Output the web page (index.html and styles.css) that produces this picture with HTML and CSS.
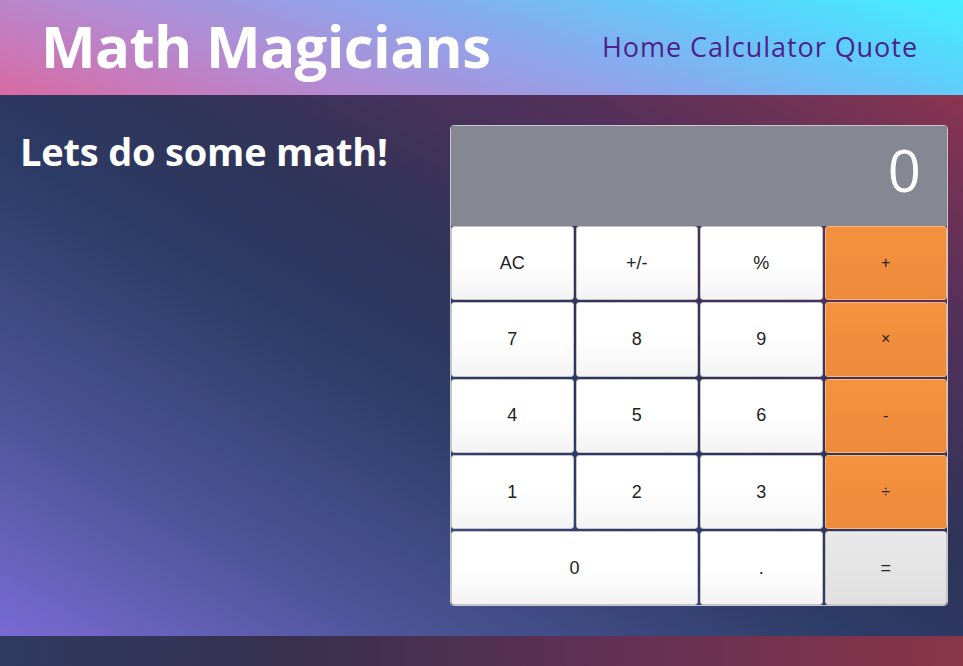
FILE: index.html
```html
<!DOCTYPE html>
<html lang="en">
<head>
<meta charset="utf-8">
<title>Math Magicians</title>
<link rel="stylesheet" href="styles.css">
</head>
<body>
<header class="header">
  <h1 class="brand">Math Magicians</h1>
  <nav class="nav">
    <a class="nav-link" href="#">Home</a>
    <a class="nav-link" href="#">Calculator</a>
    <a class="nav-link" href="#">Quote</a>
  </nav>
</header>
<main class="main">
  <h2 class="intro">Lets do some math!</h2>
  <div class="calc">
    <div class="display">0</div>
    <div class="keys">
      <button class="key">AC</button>
      <button class="key">+/-</button>
      <button class="key">%</button>
      <button class="key op">+</button>
      <button class="key">7</button>
      <button class="key">8</button>
      <button class="key">9</button>
      <button class="key op">×</button>
      <button class="key">4</button>
      <button class="key">5</button>
      <button class="key">6</button>
      <button class="key op">-</button>
      <button class="key">1</button>
      <button class="key">2</button>
      <button class="key">3</button>
      <button class="key op">÷</button>
      <button class="key zero">0</button>
      <button class="key">.</button>
      <button class="key eq">=</button>
    </div>
  </div>
</main>
<footer class="footer"></footer>
</body>
</html>
```

FILE: styles.css
```css
* { box-sizing: border-box; }
html, body { margin: 0; padding: 0; }
body {
  font-family: "Open Sans", "Noto Sans", sans-serif;
  width: 963px;
  height: 666px;
  overflow: hidden;
}
.header {
  height: 95px;
  display: flex;
  align-items: center;
  justify-content: space-between;
  padding: 0 45px 0 41px;
  background: linear-gradient(18deg, #d96aa2 0%, #b48ad2 28%, #8aa8ee 55%, #58d4fc 82%, #44f0ff 100%);
}
.brand {
  margin: 0;
  font-size: 58px;
  font-weight: 700;
  color: #fff;
  letter-spacing: -0.6px;
  line-height: 1;
  padding-bottom: 4px;
}
.nav {
  display: flex;
  gap: 8px;
  padding-bottom: 3px;
}
.nav-link {
  color: #4f1f8c;
  text-decoration: none;
  font-size: 27px;
  letter-spacing: 0.95px;
}
.main {
  height: 541px;
  display: flex;
  justify-content: space-between;
  align-items: flex-start;
  padding: 30px 15px 30px 20px;
  background: linear-gradient(to top right, #7a6ad4 0%, #4a5494 22%, #2c3b66 45%, #2f3458 58%, #55305a 80%, #8a3450 100%);
}
.intro {
  margin: 4px 0 0;
  font-size: 38px;
  font-weight: 700;
  color: #fff;
  letter-spacing: -0.2px;
  line-height: 1.2;
}
.calc {
  width: 498px;
  border: 1px solid #c8c8cc;
  border-radius: 4px;
  overflow: hidden;
}
.display {
  height: 100px;
  background: #858793;
  color: #fff;
  font-family: "Open Sans", sans-serif;
  font-weight: 400;
  font-size: 58px;
  text-align: right;
  padding: 6px 26px 0 0;
  line-height: 1.3;
}
.keys {
  display: grid;
  grid-template-columns: repeat(4, 1fr);
  grid-auto-rows: 74.3px;
  gap: 2px;
}
.key {
  font-family: "Liberation Sans", Arial, sans-serif;
  font-size: 18px;
  color: #222;
  border: 1px solid #c4c4c8;
  border-radius: 3px;
  background: linear-gradient(#ffffff 0%, #ffffff 50%, #f3f3f3 100%);
  padding: 0;
  margin: 0;
}
.op {
  background: linear-gradient(#f4923f, #ee8b3b);
  border-color: #f5b585;
  font-size: 16px;
}
.eq {
  background: linear-gradient(#e9e9e9, #e0e0e0);
}
.zero { grid-column: span 2; }
.footer {
  height: 30px;
  background: linear-gradient(to right, #2e3a60 0%, #37304f 30%, #5e3055 60%, #8a3548 100%);
}
```
